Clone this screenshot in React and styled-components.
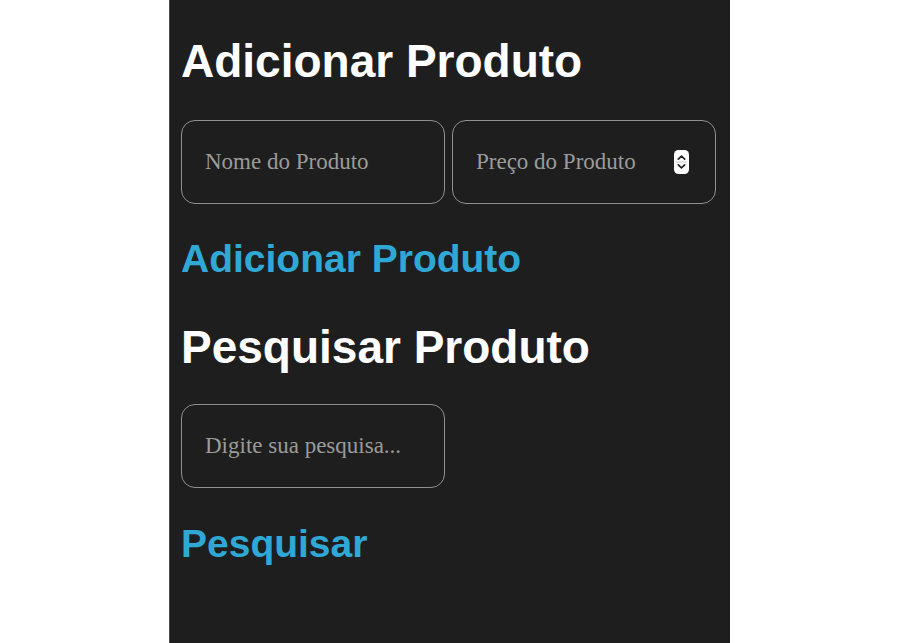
import React from 'react'
import styled, { createGlobalStyle } from 'styled-components'

const GlobalStyle = createGlobalStyle`
  html, body {
    margin: 0;
    padding: 0;
    background-color: #fff;
  }
  * {
    box-sizing: border-box;
  }
`;

const Panel = styled.main`
  width: 561px;
  min-height: 643px;
  margin: 0 0 0 169px;
  padding: 35px 14px 40px 11px;
  background-color: #1e1e1e;
  border-left: 1px solid #4a4a4a;
  display: flex;
  flex-direction: column;
  align-items: flex-start;
`;

const Title = styled.h1`
  margin: 0 0 ${props => props.gap}px;
  font-family: "Liberation Sans", Arial, sans-serif;
  font-size: 46px;
  line-height: 1.15;
  font-weight: 700;
  color: #fff;
`;

const Row = styled.div`
  display: flex;
  gap: 7px;
`;

const Field = styled.label`
  display: flex;
  align-items: center;
  width: 264px;
  height: 84px;
  padding: 0 26px 0 23px;
  border: 1px solid #909090;
  border-radius: 14px;
`;

const Input = styled.input`
  flex: 1;
  min-width: 0;
  padding: 0;
  border: none;
  outline: none;
  background: transparent;
  font-family: "Liberation Serif", "Times New Roman", serif;
  font-size: 23px;
  color: #ddd;
  -moz-appearance: textfield;

  &::placeholder {
    color: #9b9b9b;
  }
  &::-webkit-inner-spin-button,
  &::-webkit-outer-spin-button {
    -webkit-appearance: none;
    margin: 0;
  }
`;

const ActionButton = styled.button`
  margin: ${props => props.top}px 0 ${props => props.bottom}px;
  padding: 0;
  border: none;
  background: none;
  cursor: pointer;
  font-family: "Liberation Sans", Arial, sans-serif;
  font-size: 39px;
  line-height: 1.15;
  font-weight: 700;
  color: #2fa8d6;
`;

const Spinner = () => (
  <svg width="15" height="24" viewBox="0 0 15 24" aria-hidden="true">
    <rect x="0" y="0" width="15" height="24" rx="4.5" fill="#fff" />
    <line x1="2" y1="12" x2="13" y2="12" stroke="#c8c8c8" strokeWidth="1" />
    <path d="M4.3 9.2 L7.5 6.2 L10.7 9.2" fill="none" stroke="#222" strokeWidth="1.7" strokeLinecap="round" strokeLinejoin="round" />
    <path d="M4.3 14.8 L7.5 17.8 L10.7 14.8" fill="none" stroke="#222" strokeWidth="1.7" strokeLinecap="round" strokeLinejoin="round" />
  </svg>
);

export default function App() {
  return (
    <>
      <GlobalStyle />
      <Panel>
        <Title gap={32}>Adicionar Produto</Title>
        <Row>
          <Field>
            <Input type="text" placeholder="Nome do Produto" />
          </Field>
          <Field>
            <Input type="number" placeholder="Preço do Produto" />
            <Spinner />
          </Field>
        </Row>
        <ActionButton top={33} bottom={39}>Adicionar Produto</ActionButton>
        <Title gap={30}>Pesquisar Produto</Title>
        <Field>
          <Input type="text" placeholder="Digite sua pesquisa..." />
        </Field>
        <ActionButton top={34} bottom={0}>Pesquisar</ActionButton>
      </Panel>
    </>
  );
}
